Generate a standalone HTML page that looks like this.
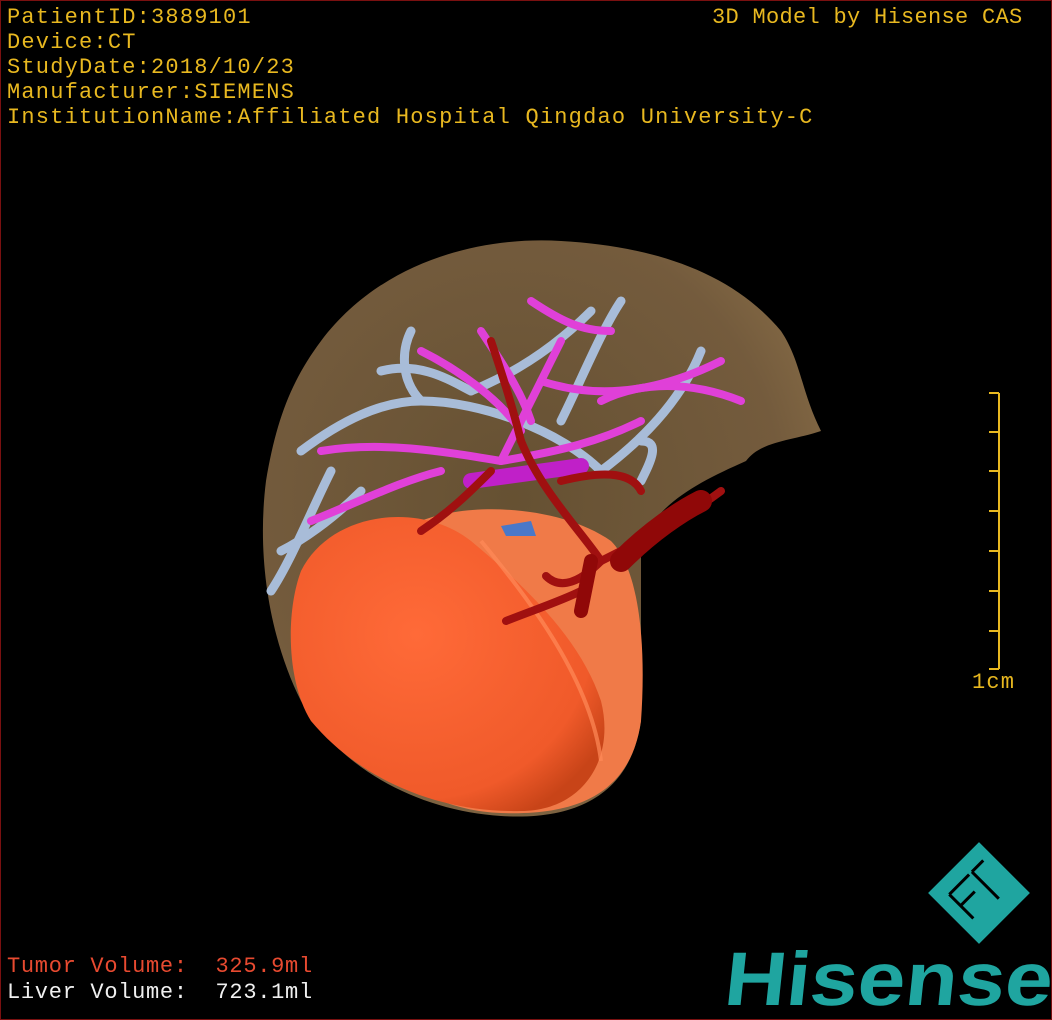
<!DOCTYPE html>
<html><head><style>
html,body{margin:0;padding:0;background:#000}
#c{position:relative;width:1050px;height:1018px;border:1px solid #7a1010;background:#000;overflow:hidden;font-family:"Liberation Mono","Noto Sans CJK SC",monospace}
.t{position:absolute;color:#e8b820;font-size:22px;line-height:25px;letter-spacing:1.2px;white-space:pre}
svg{position:absolute;left:0;top:0}
</style></head><body><div id="c">
<svg width="1050" height="1018" viewBox="0 0 1050 1018">
<defs>
<radialGradient id="lv" cx="0.45" cy="0.45" r="0.6"><stop offset="0" stop-color="#6b5535"/><stop offset="0.8" stop-color="#7a6040"/><stop offset="1" stop-color="#8a6e48"/></radialGradient>
<radialGradient id="tm" cx="0.4" cy="0.4" r="0.7"><stop offset="0" stop-color="#ff6a38"/><stop offset="0.8" stop-color="#f05a2a"/><stop offset="1" stop-color="#c84418"/></radialGradient>
</defs>
<path d="M320 340 C380 260 480 235 560 240 C650 245 730 270 780 330 C800 360 800 390 820 430 C790 440 760 440 745 460 C700 480 660 500 640 540 L640 720 C630 790 580 820 500 815 C420 810 340 770 300 700 C270 640 255 560 265 480 C275 420 290 380 320 340Z" fill="url(#lv)" opacity="0.95"/>
<path d="M420 520 C470 500 560 505 610 540 C640 570 645 650 640 720 C630 790 580 815 500 812 C440 810 390 780 380 740 Z" fill="#f07a48"/>
<path d="M300 570 C330 510 420 500 470 540 C530 590 580 640 600 700 C615 760 580 810 520 810 C440 812 360 780 310 720 C285 680 285 610 300 570Z" fill="url(#tm)"/>
<path d="M480 540 C530 600 590 680 600 760" stroke="#ff8a58" stroke-width="4" fill="none" opacity="0.7"/>
<g fill="none" stroke-linecap="round">
<g stroke="#a8bcd8" stroke-width="9">
<path d="M600 470 C560 430 480 400 420 400 C380 400 340 420 300 450"/>
<path d="M420 400 C400 380 400 350 410 330"/>
<path d="M330 470 C310 510 290 560 270 590"/>
<path d="M360 490 C330 520 300 540 280 550"/>
<path d="M600 470 C640 440 680 400 700 350"/>
<path d="M560 420 C580 380 600 330 620 300"/>
<path d="M470 390 C520 370 560 340 590 310"/>
<path d="M380 370 C420 360 450 380 470 390"/>
<path d="M640 440 C660 440 650 460 640 480"/>
</g>
<g stroke="#e040d8" stroke-width="8">
<path d="M320 450 C380 440 440 450 500 460 C560 450 600 440 640 420"/>
<path d="M500 460 C520 420 540 380 560 340"/>
<path d="M540 380 C600 400 660 390 720 360"/>
<path d="M600 400 C640 380 690 380 740 400"/>
<path d="M420 350 C460 370 500 400 520 430"/>
<path d="M480 330 C500 360 520 390 530 420"/>
<path d="M310 520 C360 500 400 480 440 470"/>
<path d="M530 300 C560 320 580 330 610 330"/>
</g>
<path d="M470 480 L580 465" stroke="#c020c8" stroke-width="16"/>
<g stroke="#a01010" stroke-width="8">
<path d="M520 440 C540 490 580 530 600 560"/>
<path d="M600 560 C640 540 680 520 720 490"/>
<path d="M580 590 C560 600 530 610 505 620"/>
<path d="M600 560 C580 580 560 590 545 575"/>
<path d="M490 470 C470 490 450 510 420 530"/>
<path d="M520 440 C510 400 500 370 490 340"/>
<path d="M560 480 C600 470 630 470 640 490"/>
</g>
<path d="M620 560 C650 530 680 510 700 500" stroke="#900808" stroke-width="22"/>
<path d="M590 560 L580 610" stroke="#900808" stroke-width="14"/>
</g>
<path d="M500 525 L530 520 L535 535 L505 535Z" fill="#4a78c8"/>
<g stroke="#e8b820" stroke-width="2">
<path d="M998 392 V668"/>
<path d="M988 392H998M988 431H998M988 470H998M988 510H998M988 550H998M988 590H998M988 630H998M988 668H998"/>
</g>
<g transform="translate(978 892) rotate(-45)">
<rect x="-36" y="-36" width="72" height="72" fill="#1fa5a0"/>
<path d="M-22 -20 V14 M-22 -20 H6 M-22 -4 H-2 M10 -20 V18 M10 -20 H26" stroke="#000" stroke-width="3" fill="none"/>
</g>
<text x="722" y="1004" fill="#1fa5a0" font-family="Liberation Sans" font-weight="bold" font-size="76" textLength="328" lengthAdjust="spacingAndGlyphs" transform="skewX(-6) translate(105 0)">Hisense</text>
</svg>
<div class="t" style="left:6px;top:4px">PatientID:3889101
Device:CT
StudyDate:2018/10/23
Manufacturer:SIEMENS
InstitutionName:Affiliated Hospital Qingdao University-C</div>
<div class="t" style="left:711px;top:4px;letter-spacing:0.3px">3D Model by Hisense CAS</div>
<div class="t" style="left:971px;top:669px">1cm</div>
<div class="t" style="left:6px;top:953px;color:#e84a30;letter-spacing:0.7px">Tumor Volume:  325.9ml</div>
<div class="t" style="left:6px;top:979px;color:#f0f0f0;letter-spacing:0.7px">Liver Volume:  723.1ml</div>
</div></body></html>
